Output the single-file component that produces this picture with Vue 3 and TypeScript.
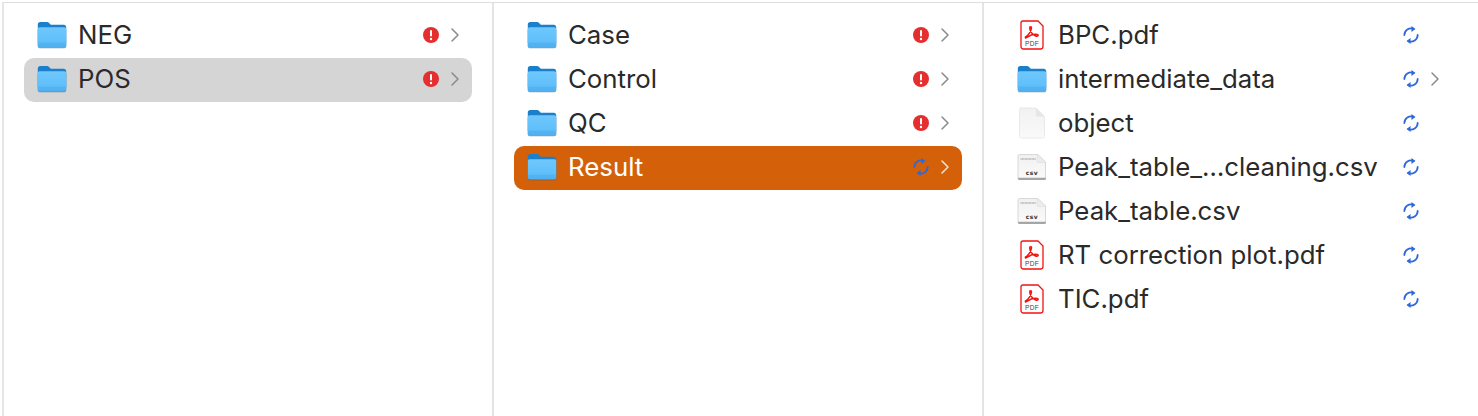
<template>
  <svg class="defs" aria-hidden="true">
    <defs>
      <linearGradient id="folderFront" x1="0" y1="0" x2="0" y2="1">
        <stop offset="0" stop-color="#6fc8fc" />
        <stop offset="0.75" stop-color="#5fbefa" />
        <stop offset="1" stop-color="#4eaeef" />
      </linearGradient>
      <linearGradient id="pageFill" x1="0" y1="0" x2="0" y2="1">
        <stop offset="0" stop-color="#f1f1f1" />
        <stop offset="1" stop-color="#fafafa" />
      </linearGradient>
      <symbol id="folder" viewBox="0 0 30 28">
        <path d="M.8 22V3.400C.8 2 1.800 1 3.200 1h6.800c.9 0 1.500.3 2.100.9l1.700 1.800h13c1.400 0 2.400 1 2.400 2.400v15.900z" fill="#1a80cc" />
        <rect x=".8" y="7.400" width="28.400" height="19.800" rx="1.800" fill="#2b5f8a" opacity=".6" />
        <rect x=".8" y="6.200" width="28.400" height="20.400" rx="1.800" fill="url(#folderFront)" />
        <path d="M.8 22.300h28.400M.8 24h28.400" stroke="#4aa7e7" stroke-width=".6" />
      </symbol>
      <symbol id="alert" viewBox="0 0 20 20">
        <circle cx="10" cy="10" r="8" fill="#e52e2e" />
        <rect x="9" y="5" width="2" height="6.600" rx="1" fill="#fff" />
        <circle cx="10" cy="14" r="1.200" fill="#fff" />
      </symbol>
      <symbol id="sync" viewBox="0 0 16 18">
        <path d="M2 9a6 6 0 0 1 8.400-5.500M14 9a6 6 0 0 1-8.400 5.500" fill="none" stroke="#2d68dc" stroke-width="1.600" stroke-linecap="round" />
        <path d="M8.400 .8l3.600 2.800-3.600 2.600zM7.600 17.200L4 14.400l3.600-2.600z" fill="#2d68dc" />
      </symbol>
      <symbol id="chevron" viewBox="0 0 14 16">
        <path d="M4 2l6 6-6 6" fill="none" stroke="currentColor" stroke-width="1.500" stroke-linecap="round" stroke-linejoin="round" />
      </symbol>
      <symbol id="blank" viewBox="0 0 28 32">
        <path d="M2.500 1h15.500l8.500 8.500v20c0 .9-.6 1.500-1.500 1.500h-22c-.9 0-1.500-.6-1.500-1.500v-27c0-.9.600-1.500 1.500-1.500z" fill="url(#pageFill)" stroke="#e4e4e4" stroke-width=".8" />
        <path d="M18 1v7c0 .9.600 1.500 1.500 1.500h7z" fill="#e6e6e6" />
      </symbol>
    </defs>
  </svg>

  <div class="browser">
    <section v-for="(col, c) in columns" :key="c" class="column">
      <div
        v-for="item in col"
        :key="item.name"
        class="row"
        :class="item.state ? `row--${item.state}` : ''"
      >
        <span class="row__icon">
          <svg v-if="item.kind === 'folder'" class="ico-folder"><use href="#folder" /></svg>
          <svg v-else-if="item.kind === 'blank'" class="ico-blank"><use href="#blank" /></svg>
          <svg v-else-if="item.kind === 'pdf'" class="ico-pdf" viewBox="0 0 24 30">
            <path d="M3 1h15l5 5v20.500c0 1.400-1 2.500-2.400 2.500H3.400C2 29 1 27.900 1 26.500V3c0-1.100.9-2 2-2z" fill="#fff" stroke="#f2130f" stroke-width="1.300" />
            <path d="M5.500 17c2.500-1 5.500-5.500 6-9 .2-1.600-1.500-1.800-1.700-.3-.3 3 2.800 7.500 5.800 8.300 2.400.6 3.300-1 1.800-1.400-2.600-.6-6.600.4-9 2-1.400.9-3.500 2.300-2.900.4z" fill="none" stroke="#f2130f" stroke-width="1.500" />
            <text x="12" y="25.500" class="pdf-label">PDF</text>
          </svg>
          <svg v-else class="ico-csv" viewBox="0 0 30 28">
            <path d="M2.500 1.500h18.500l7.500 7.500v16c0 .9-.6 1.500-1.500 1.500h-24.500c-.9 0-1.500-.6-1.500-1.500v-22c0-.9.600-1.500 1.500-1.500z" fill="url(#pageFill)" stroke="#cfcfcf" stroke-width=".8" />
            <path d="M1 24.800v.7c0 .9.600 1.500 1.500 1.500h25c.9 0 1.500-.6 1.500-1.500v-.7z" fill="#a6a6a6" />
            <path d="M20 1.500v7c0 .6.400 1 1 1h8z" fill="#ececec" stroke="#d8d8d8" stroke-width=".5" />
            <path d="M3.500 6h15.500" stroke="#b0b0b0" stroke-width="1.600" stroke-dasharray="1 .4" />
            <text x="15" y="21.800" class="csv-label">csv</text>
          </svg>
        </span>
        <span class="row__name">{{ item.name }}</span>
        <svg class="row__badge"><use :href="item.badge === 'alert' ? '#alert' : '#sync'" /></svg>
        <svg v-if="item.kind === 'folder'" class="row__chevron"><use href="#chevron" /></svg>
        <span v-else class="row__chevron"></span>
      </div>
    </section>
  </div>
</template>

<script setup lang="ts">
type Kind = 'folder' | 'pdf' | 'blank' | 'csv'

interface Item {
  name: string
  kind: Kind
  badge: 'alert' | 'sync'
  state?: 'inactive' | 'active'
}

const columns: Item[][] = [
  [
    { name: 'NEG', kind: 'folder', badge: 'alert' },
    { name: 'POS', kind: 'folder', badge: 'alert', state: 'inactive' }
  ],
  [
    { name: 'Case', kind: 'folder', badge: 'alert' },
    { name: 'Control', kind: 'folder', badge: 'alert' },
    { name: 'QC', kind: 'folder', badge: 'alert' },
    { name: 'Result', kind: 'folder', badge: 'sync', state: 'active' }
  ],
  [
    { name: 'BPC.pdf', kind: 'pdf', badge: 'sync' },
    { name: 'intermediate_data', kind: 'folder', badge: 'sync' },
    { name: 'object', kind: 'blank', badge: 'sync' },
    { name: 'Peak_table_…cleaning.csv', kind: 'csv', badge: 'sync' },
    { name: 'Peak_table.csv', kind: 'csv', badge: 'sync' },
    { name: 'RT correction plot.pdf', kind: 'pdf', badge: 'sync' },
    { name: 'TIC.pdf', kind: 'pdf', badge: 'sync' }
  ]
]
</script>

<style>
html,
body {
  margin: 0;
  background: #fff;
}
</style>

<style scoped>
.defs {
  display: block;
  width: 0;
  height: 0;
}
.browser {
  box-sizing: border-box;
  height: 414px;
  margin: 2px 0 0 2px;
  display: grid;
  grid-template-columns: 490px 490px 1fr;
  border-top: 1px solid #dedede;
  border-left: 2px solid #e6e6e6;
  font-family: Inter, "Liberation Sans", sans-serif;
}
.column {
  box-sizing: border-box;
  padding: 11px 20px 0;
  border-right: 2px solid #e4e4e4;
  min-width: 0;
}
.column:last-child {
  border-right: 0;
  padding-right: 26px;
}
.row {
  box-sizing: border-box;
  height: 44px;
  display: flex;
  align-items: center;
  padding: 0 10px 2px 13px;
  border-radius: 10px;
  color: #2a2a2a;
  font-size: 25.800px;
}
.row--inactive {
  background: #d5d5d5;
}
.row--active {
  background: #d4610a;
  color: #fff;
}
.row__icon {
  width: 30px;
  height: 32px;
  flex: none;
  display: flex;
  align-items: center;
  justify-content: center;
  margin-right: 11px;
}
.ico-folder {
  width: 30px;
  height: 28px;
}
.ico-pdf {
  width: 24px;
  height: 30px;
}
.ico-blank {
  width: 28px;
  height: 32px;
}
.ico-csv {
  width: 30px;
  height: 28px;
}
.pdf-label {
  font-family: "Liberation Sans", sans-serif;
  font-size: 6.500px;
  text-anchor: middle;
  letter-spacing: .3px;
  fill: #444;
}
.csv-label {
  font-family: "DejaVu Sans", sans-serif;
  font-size: 6px;
  font-weight: 700;
  text-anchor: middle;
  letter-spacing: .5px;
  fill: #333;
}
.row__name {
  flex: 1;
  min-width: 0;
  white-space: nowrap;
  margin-bottom: 2px;
}
.row__badge {
  width: 20px;
  height: 20px;
  flex: none;
}
.row__chevron {
  width: 14px;
  height: 16px;
  flex: none;
  margin-left: 7px;
  color: #8a8a8a;
}
.row--active .row__chevron {
  color: #f6e3d5;
}
</style>
